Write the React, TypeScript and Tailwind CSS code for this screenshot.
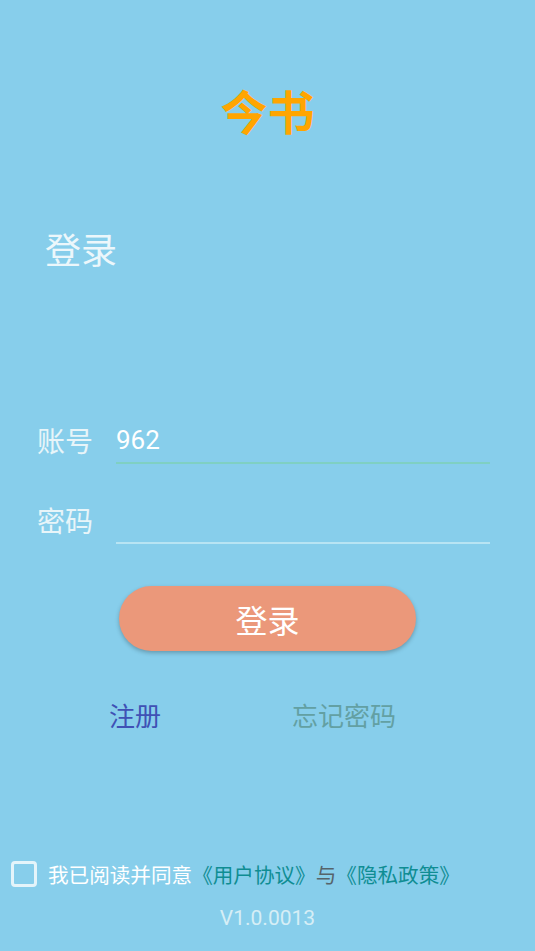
import React from "react";

const cjk = { fontFamily: '"Noto Sans CJK SC", "Noto Sans", sans-serif' };
const num = { fontFamily: 'Roboto, "Noto Sans CJK SC", sans-serif' };

export default function App() {
  return (
    <div className="w-full h-[951px] bg-[#87CEEB] flex flex-col overflow-hidden" style={cjk}>
      <div className="pt-[82px] text-center text-[47px] leading-[56px] font-bold text-[#FFA500]">今书</div>
      <div className="mt-[88px] pl-[45px] text-[36px] leading-[44px] text-[#ecf7fb]">登录</div>

      <div className="mt-[148px] flex h-[46px] items-start">
        <div className="w-[116px] pl-[37px] text-[28px] leading-[44px] text-[#e8f5f9]">账号</div>
        <div className="w-[374px] h-[46px] border-b-2 border-[#7fd0c2] text-[26px] leading-[44px] text-white" style={num}>962</div>
      </div>
      <div className="mt-[34px] flex h-[46px] items-start">
        <div className="w-[116px] pl-[37px] text-[28px] leading-[44px] text-[#e8f5f9]">密码</div>
        <div className="w-[374px] h-[46px] border-b-2 border-[#b8e4f3]"></div>
      </div>

      <div className="mt-[42px] flex pl-[119px]">
        <button className="w-[297px] h-[65px] rounded-full bg-[#EB987A] text-white text-[32px] shadow-[0_2px_4px_rgba(0,0,0,0.25)]" style={cjk}>登录</button>
      </div>

      <div className="mt-[46px] flex h-[36px] text-[26px] leading-[36px]">
        <div className="pl-[109px] w-[292px] text-[#3F51B5]">注册</div>
        <div className="text-[#63a0a3]">忘记密码</div>
      </div>

      <div className="mt-[126px] flex h-[30px] items-center pl-[11px]">
        <div className="w-[26px] h-[26px] rounded-[4px] border-[3px] border-[#e4f4fa]"></div>
        <div className="ml-[11px] text-[20.6px] leading-[30px] text-white whitespace-nowrap">
          我已阅读并同意<span className="text-[#0f8d93]">《用户协议》</span><span className="text-[#56646a]">与</span><span className="text-[#0f8d93]">《隐私政策》</span>
        </div>
      </div>

      <div className="mt-[17px] text-center text-[21px] leading-[24px] text-[#d6eef6]" style={num}>V1.0.0013</div>
    </div>
  );
}
